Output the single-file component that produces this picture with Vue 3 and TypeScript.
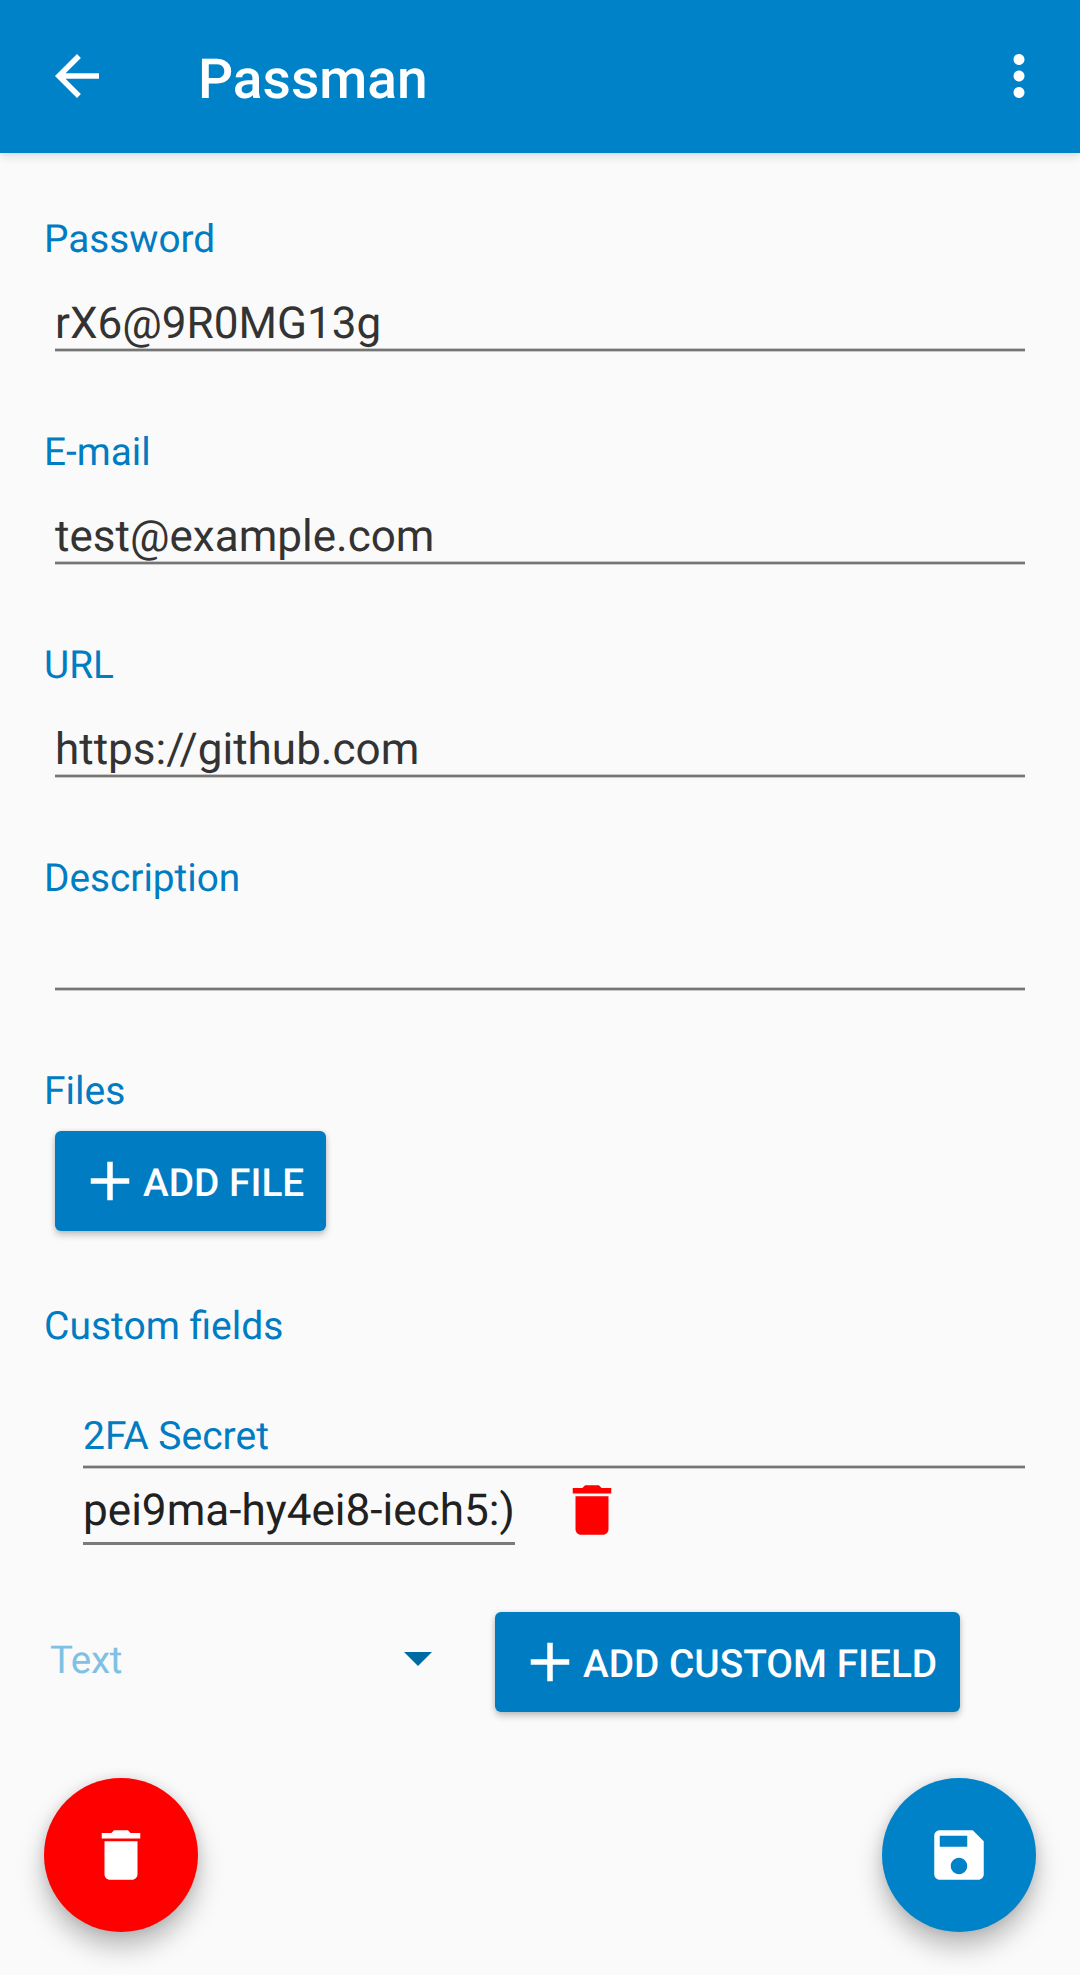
<script setup lang="ts">
interface Field {
  label: string
  value: string
}

const fields: Field[] = [
  { label: 'Password', value: 'rX6@9R0MG13g' },
  { label: 'E-mail', value: 'test@example.com' },
  { label: 'URL', value: 'https://github.com' },
  { label: 'Description', value: '' },
]
</script>

<template>
  <div class="screen">
    <header class="bar">
      <svg class="icon" viewBox="0 0 24 24"><path d="M20 11H7.83l5.59-5.59L12 4l-8 8 8 8 1.41-1.41L7.83 13H20v-2z" /></svg>
      <h1 class="title">Passman</h1>
      <svg class="icon more" viewBox="0 0 24 24"><path d="M12 8c1.1 0 2-.9 2-2s-.9-2-2-2-2 .9-2 2 .9 2 2 2zm0 2c-1.1 0-2 .9-2 2s.9 2 2 2 2-.9 2-2-.9-2-2-2zm0 6c-1.1 0-2 .9-2 2s.9 2 2 2 2-.9 2-2-.9-2-2-2z" /></svg>
    </header>

    <main class="form">
      <section v-for="f in fields" :key="f.label" class="field">
        <div class="label">{{ f.label }}</div>
        <div class="value">{{ f.value }}</div>
        <div class="line"></div>
      </section>

      <section class="files">
        <div class="label">Files</div>
        <button class="btn">
          <svg class="icon" viewBox="0 0 24 24"><path d="M19 13h-6v6h-2v-6H5v-2h6V5h2v6h6v2z" /></svg>
          <span>ADD FILE</span>
        </button>
      </section>

      <section class="custom">
        <div class="label">Custom fields</div>
        <div class="entry">
          <div class="label name">2FA Secret</div>
          <div class="line"></div>
          <div class="row">
            <div class="secret">pei9ma-hy4ei8-iech5:)</div>
            <svg class="icon trash" viewBox="0 0 24 24"><path d="M6 19c0 1.1.9 2 2 2h8c1.1 0 2-.9 2-2V7H6v12zM19 4h-3.5l-1-1h-5l-1 1H5v2h14V4z" /></svg>
          </div>
        </div>
      </section>

      <section class="adder">
        <div class="select">
          <span>Text</span>
          <svg class="caret" viewBox="0 0 28 14"><path d="M0 0h28L14 14z" /></svg>
        </div>
        <button class="btn">
          <svg class="icon" viewBox="0 0 24 24"><path d="M19 13h-6v6h-2v-6H5v-2h6V5h2v6h6v2z" /></svg>
          <span>ADD CUSTOM FIELD</span>
        </button>
      </section>
    </main>

    <footer class="actions">
      <button class="fab delete">
        <svg class="icon" viewBox="0 0 24 24"><path d="M6 19c0 1.1.9 2 2 2h8c1.1 0 2-.9 2-2V7H6v12zM19 4h-3.5l-1-1h-5l-1 1H5v2h14V4z" /></svg>
      </button>
      <button class="fab save">
        <svg class="icon" viewBox="0 0 24 24"><path d="M17 3H5c-1.11 0-2 .9-2 2v14c0 1.1.89 2 2 2h14c1.1 0 2-.9 2-2V7l-4-4zm-5 16c-1.66 0-3-1.34-3-3s1.34-3 3-3 3 1.34 3 3-1.34 3-3 3zm3-10H5V5h10v4z" /></svg>
      </button>
    </footer>
  </div>
</template>

<style>
body {
  margin: 0;
  background: #fafafa;
}
</style>

<style scoped>
.screen {
  display: flex;
  flex-direction: column;
  box-sizing: border-box;
  width: 1080px;
  height: 1975px;
  overflow: hidden;
  background: #fafafa;
  font-family: Roboto, sans-serif;
  text-rendering: geometricPrecision;
}
.icon {
  display: block;
  flex: none;
  width: 66px;
  height: 66px;
  fill: currentColor;
}
.bar {
  display: flex;
  flex: none;
  align-items: center;
  box-sizing: border-box;
  height: 153px;
  padding: 0 28px 1px 44px;
  color: #fff;
  background: #0082c9;
  box-shadow: 0 3px 10px rgba(0, 0, 0, 0.12), 0 0 3px rgba(0, 0, 0, 0.1);
}
.title {
  flex: 1;
  margin: 8px 0 0 88px;
  font-size: 55.1px;
  font-weight: 500;
  line-height: 64px;
}
.form {
  flex: none;
  height: 1625px;
}
.label {
  height: 46px;
  padding-left: 44px;
  color: #007cc2;
  font-size: 39px;
  line-height: 46px;
  white-space: nowrap;
}
.field {
  height: 213px;
}
.field .label {
  font-size: 38.75px;
  line-height: 48px;
}
.field:first-child {
  padding-top: 63px;
}
.value {
  height: 51px;
  margin-left: 55px;
  padding-top: 35px;
  color: #333;
  font-size: 44.05px;
  line-height: 52px;
  white-space: nowrap;
}
.line {
  height: 4px;
  margin: 0 55px;
  background: linear-gradient(#c8c8c8 1px, #757575 1px 3px, #c8c8c8 3px);
}
.files {
  height: 235px;
}
.btn {
  display: flex;
  align-items: center;
  box-sizing: border-box;
  height: 100px;
  padding: 0 22px;
  border: 0;
  border-radius: 6px;
  color: #fff;
  background: #007cc2;
  box-shadow: 0 4px 7px rgba(0, 0, 0, 0.22), 0 0 4px rgba(0, 0, 0, 0.1);
  font: 500 38.8px/46px Roboto, sans-serif;
  text-rendering: geometricPrecision;
  white-space: nowrap;
}
.btn span {
  margin-top: 5px;
}
.files .btn {
  width: 271px;
  margin: 17px 0 0 55px;
}
.entry {
  padding: 64px 0 0 83px;
}
.name {
  padding: 0;
}
.entry .line {
  margin: 6px 55px 0 0;
}
.row {
  display: flex;
}
.secret {
  width: 432px;
  height: 58px;
  padding-top: 15px;
  border-bottom: 3px solid #7b7b7b;
  color: #212121;
  font-size: 44.1px;
  line-height: 52px;
  white-space: nowrap;
}
.trash {
  margin: 8px 0 0 44px;
  color: #f00;
}
.adder {
  display: flex;
  padding-top: 67px;
}
.select {
  display: flex;
  justify-content: space-between;
  box-sizing: border-box;
  width: 495px;
  padding: 26px 63px 0 50px;
  color: #7fc0e4;
  font-size: 38.5px;
  letter-spacing: -0.3px;
  line-height: 46px;
}
.caret {
  width: 28px;
  height: 14px;
  margin-top: 14px;
  fill: #006aa3;
}
.adder .btn {
  width: 465px;
}
.actions {
  display: flex;
  justify-content: space-between;
  padding: 0 44px;
}
.fab {
  display: grid;
  place-items: center;
  width: 154px;
  height: 154px;
  padding: 0;
  border: 0;
  border-radius: 50%;
  color: #fff;
  box-shadow: 0 15px 26px rgba(0, 0, 0, 0.26), 0 0 12px rgba(0, 0, 0, 0.1);
}
.delete {
  background: #f00;
}
.save {
  background: #0082c9;
}
</style>
